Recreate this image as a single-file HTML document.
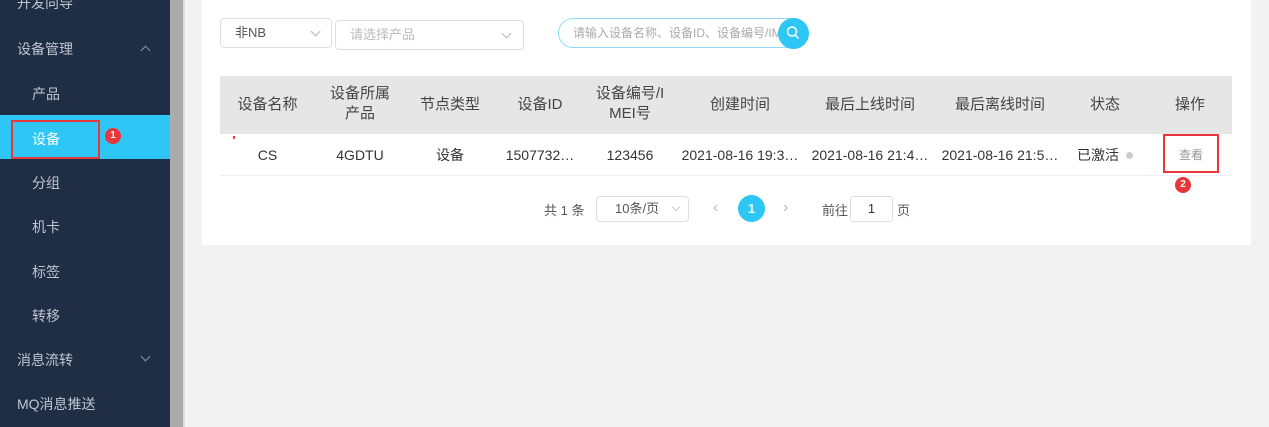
<!DOCTYPE html>
<html><head><meta charset="utf-8"><style>
*{margin:0;padding:0;box-sizing:border-box}
body{width:1269px;height:427px;overflow:hidden;background:#f2f2f2;font-family:"Liberation Sans","Noto Sans CJK SC",sans-serif;position:relative;font-size:14px;color:#333}
.side{position:absolute;left:0;top:0;width:170px;height:427px;background:#1f2d45}
.scroll{position:absolute;left:170px;top:0;width:13px;height:427px;background:#ababab}
.scroll2{position:absolute;left:183px;top:0;width:2px;height:427px;background:#e0e0e0}
.mi{position:absolute;color:#bfc5cf;font-size:14px}
.card{position:absolute;left:202px;top:0;width:1049px;height:245px;background:#fff}
.abs{position:absolute}
.sel{position:absolute;border:1px solid #dcdfe6;border-radius:4px;height:30px;font-size:13px;line-height:28px;padding-left:14px}
.chev{position:absolute;width:7px;height:7px;border-right:1px solid #b0b4bb;border-bottom:1px solid #b0b4bb;transform:rotate(45deg)}
.th{position:absolute;top:76px;height:58px;background:#e6e6e6;left:220px;width:1012px}
.c{position:absolute;text-align:center;font-size:14px;line-height:20px}
.h{font-size:15px;color:#444}
.red{position:absolute;border:2px solid #e8363b}
.badge{position:absolute;width:16px;height:16px;border-radius:50%;background:#e8363b;color:#fff;font-size:10px;font-weight:bold;text-align:center;line-height:16px}
</style></head><body>
<div class="side">
<div class="mi" style="left:17px;top:-7px">开发向导</div>
<div class="mi" style="left:17px;top:39px">设备管理</div>
<div class="chev" style="left:142px;top:47px;transform:rotate(-135deg);border-color:#8a94a6"></div>
<div class="mi" style="left:32px;top:84px">产品</div>
<div style="position:absolute;left:0;top:115px;width:170px;height:44px;background:#2ec7f5"></div>
<div class="mi" style="left:32px;top:129px;color:#fff">设备</div>
<div class="red" style="left:11px;top:120px;width:89px;height:39px"></div>
<div class="badge" style="left:105px;top:128px">1</div>
<div class="mi" style="left:32px;top:173px">分组</div>
<div class="mi" style="left:32px;top:217px">机卡</div>
<div class="mi" style="left:32px;top:262px">标签</div>
<div class="mi" style="left:32px;top:306px">转移</div>
<div class="mi" style="left:17px;top:350px">消息流转</div>
<div class="chev" style="left:142px;top:353px;border-color:#8a94a6"></div>
<div class="mi" style="left:17px;top:394px">MQ消息推送</div>
</div>
<div class="scroll"></div><div class="scroll2"></div>
<div class="card"></div>
<div class="sel" style="left:220px;top:18px;width:112px;color:#555">非NB</div>
<div class="chev" style="left:312px;top:28px"></div>
<div class="sel" style="left:335px;top:20px;width:189px;color:#bbb">请选择产品</div>
<div class="chev" style="left:503px;top:30px"></div>
<div class="abs" style="left:558px;top:18px;width:250px;height:30px;border:1px solid #8ddcf5;border-radius:15px;font-size:12px;color:#aaa;line-height:28px;padding-left:14px;white-space:nowrap;overflow:hidden">请输入设备名称、设备ID、设备编号/IMEI</div>
<div class="abs" style="left:778px;top:18px;width:31px;height:31px;border-radius:50%;background:#2ec7f5"></div>
<svg class="abs" style="left:785px;top:25px" width="16" height="16" viewBox="0 0 16 16"><circle cx="7" cy="6.5" r="4.5" fill="none" stroke="#fff" stroke-width="1.5"/><path d="M10 10l3.5 3.5" stroke="#fff" stroke-width="1.5"/></svg>
<div class="th"></div>
<div class="c h" style="left:220px;width:95px;top:95px">设备名称</div>
<div class="c h" style="left:315px;width:90px;top:84px">设备所属<br>产品</div>
<div class="c h" style="left:405px;width:90px;top:95px">节点类型</div>
<div class="c h" style="left:495px;width:90px;top:95px">设备ID</div>
<div class="c h" style="left:585px;width:90px;top:84px">设备编号/I<br>MEI号</div>
<div class="c h" style="left:675px;width:130px;top:95px">创建时间</div>
<div class="c h" style="left:805px;width:130px;top:95px">最后上线时间</div>
<div class="c h" style="left:935px;width:130px;top:95px">最后离线时间</div>
<div class="c h" style="left:1065px;width:80px;top:95px">状态</div>
<div class="c h" style="left:1150px;width:80px;top:95px">操作</div>
<div class="abs" style="left:233px;top:136px;width:2px;height:3px;background:#f33"></div>
<div class="c" style="left:220px;width:95px;top:145px">CS</div>
<div class="c" style="left:315px;width:90px;top:145px">4GDTU</div>
<div class="c" style="left:405px;width:90px;top:145px">设备</div>
<div class="c" style="left:495px;width:90px;top:145px">1507732…</div>
<div class="c" style="left:585px;width:90px;top:145px">123456</div>
<div class="c" style="left:675px;width:130px;top:145px">2021-08-16 19:3…</div>
<div class="c" style="left:805px;width:130px;top:145px">2021-08-16 21:4…</div>
<div class="c" style="left:935px;width:130px;top:145px">2021-08-16 21:5…</div>
<div class="c" style="left:1070px;width:56px;top:145px">已激活</div>
<div class="abs" style="left:1126px;top:152px;width:7px;height:7px;border-radius:50%;background:#ccc"></div>
<div class="c" style="left:1163px;width:56px;top:145px;font-size:12px;color:#999">查看</div>
<div class="red" style="left:1163px;top:134px;width:56px;height:39px"></div>
<div class="badge" style="left:1175px;top:177px">2</div>
<div class="abs" style="left:220px;top:175px;width:1012px;height:1px;background:#ebeef5"></div>
<div class="abs" style="left:544px;top:200px;font-size:13px;color:#555">共 1 条</div>
<div class="sel" style="left:596px;top:196px;width:93px;height:26px;line-height:24px;padding-left:18px;color:#555">10条/页</div>
<div class="chev" style="left:673px;top:204px;width:6px;height:6px;border-color:#ccc"></div>
<div class="abs" style="left:713px;top:199px;color:#bbb;font-size:16px">‹</div>
<div class="abs" style="left:738px;top:195px;width:27px;height:27px;border-radius:50%;background:#2ec7f5;color:#fff;text-align:center;line-height:27px;font-size:13px;font-weight:bold">1</div>
<div class="abs" style="left:783px;top:199px;color:#bbb;font-size:16px">›</div>
<div class="abs" style="left:822px;top:200px;font-size:13px;color:#555">前往</div>
<div class="abs" style="left:850px;top:196px;width:43px;height:26px;border:1px solid #dcdfe6;border-radius:3px;text-align:center;line-height:24px;font-size:13px">1</div>
<div class="abs" style="left:897px;top:200px;font-size:13px;color:#555">页</div>
</body></html>
